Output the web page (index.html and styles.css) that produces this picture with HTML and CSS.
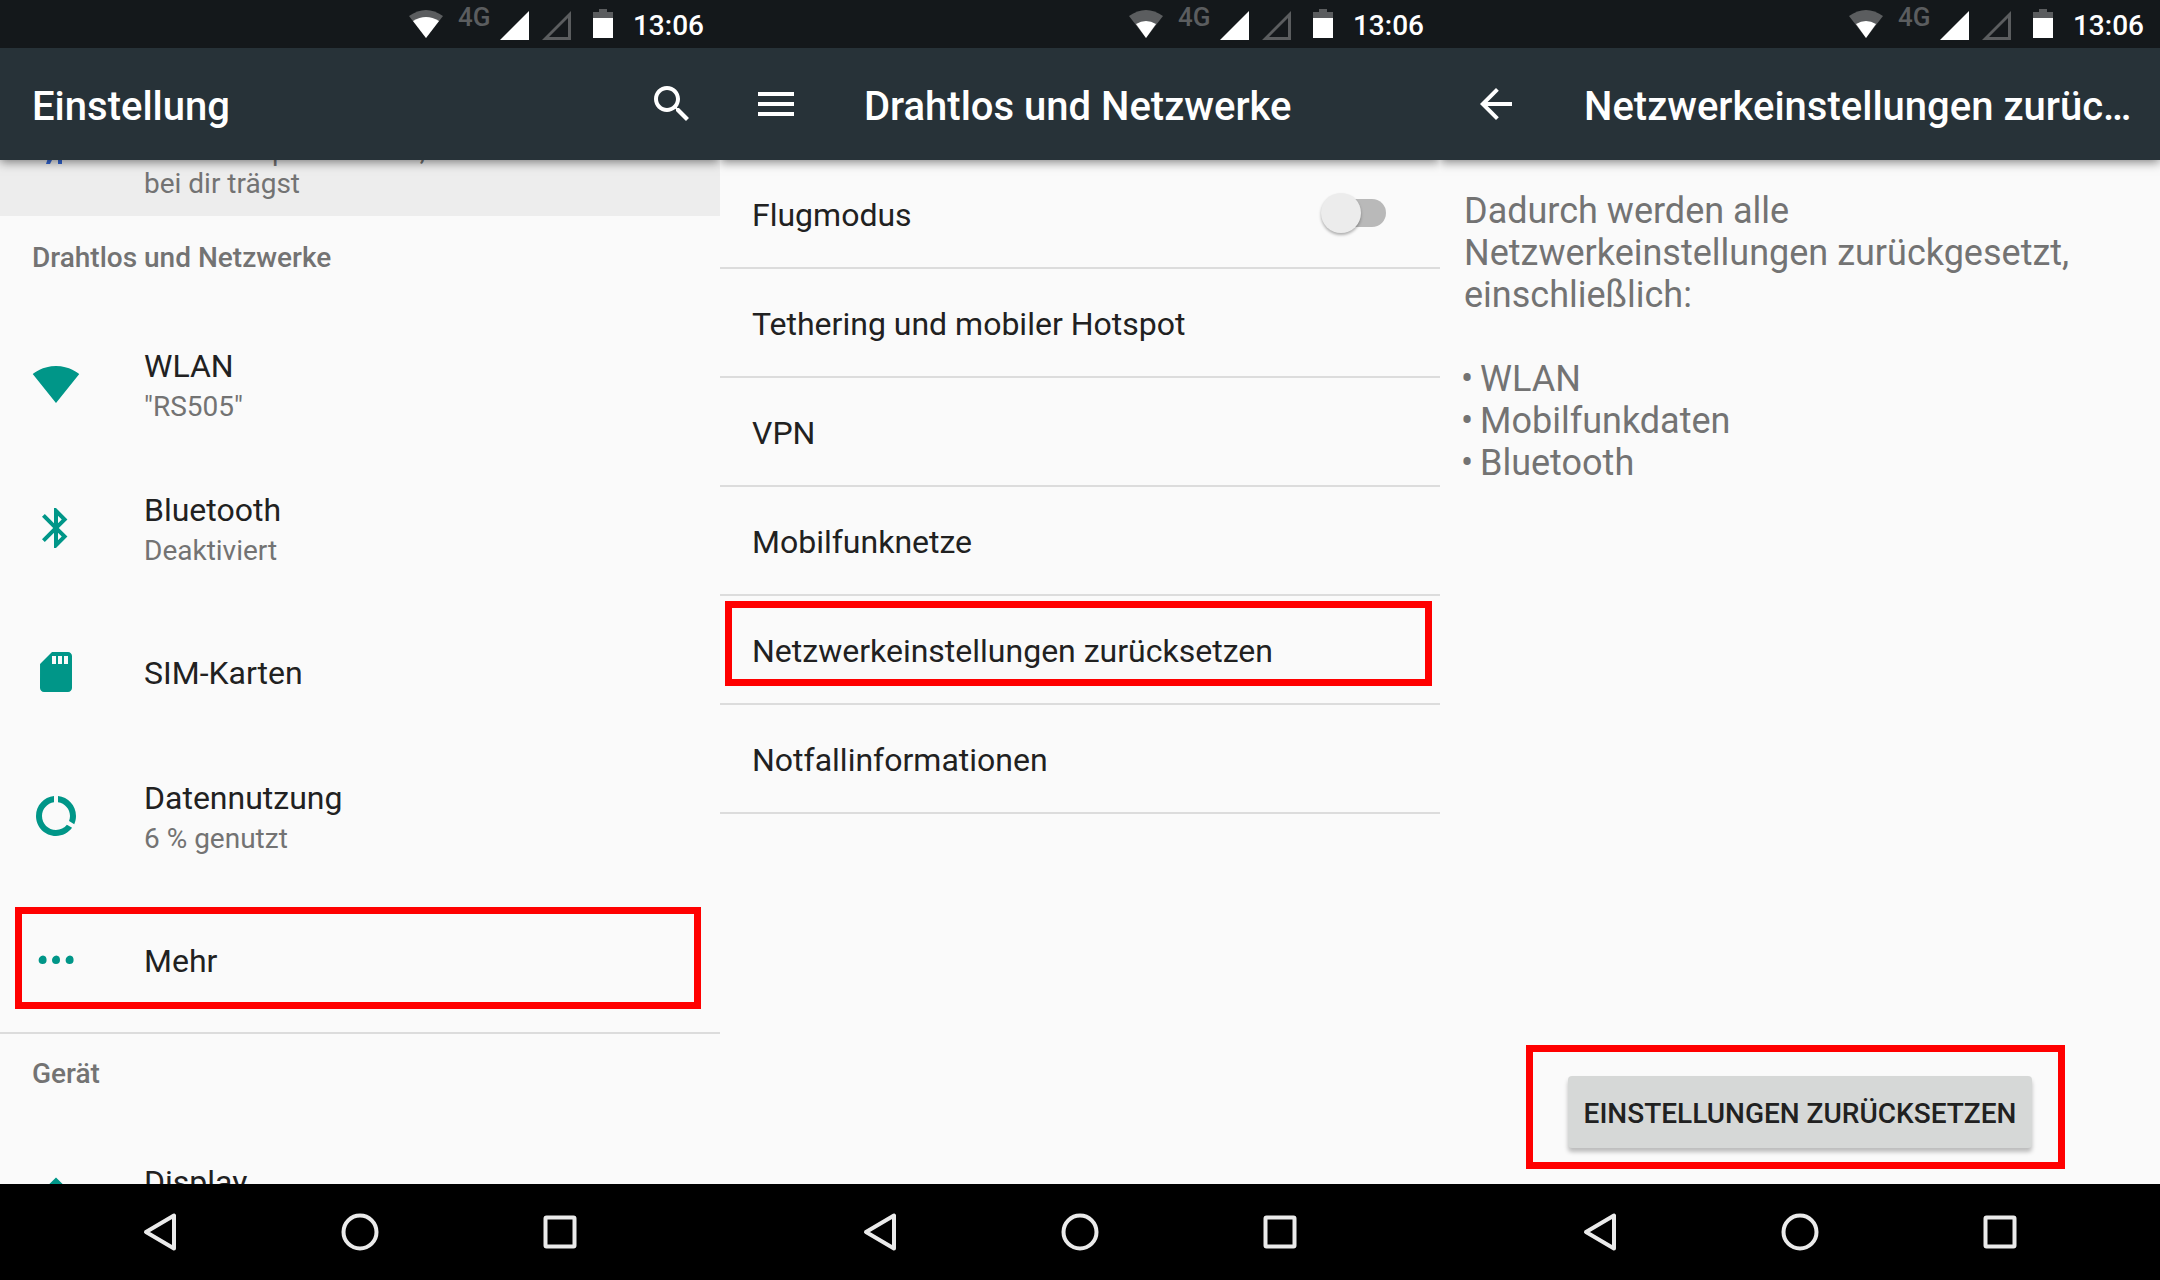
FILE: index.html
```html
<!DOCTYPE html>
<html lang="de">
<head>
<meta charset="utf-8">
<meta name="viewport" content="width=device-width, initial-scale=1">
<title>Netzwerkeinstellungen zurücksetzen</title>
<link rel="stylesheet" href="styles.css">
</head>
<body>
<svg class="sprite" aria-hidden="true">
  <symbol id="signal-full" viewBox="0 0 32 48"><path d="M1 40 30 11V40Z"/></symbol>
  <symbol id="signal-empty" viewBox="0 0 32 48"><path d="M1 40 30 11V40ZM8 37H27V18Z" fill-rule="evenodd"/></symbol>
  <symbol id="battery" viewBox="0 0 20 48"><path class="dim" d="M6 9h8v3h6v7H0v-7h6Z"/><path d="M0 18h20v20H0Z"/></symbol>
  <symbol id="nav-back" viewBox="0 0 48 48"><path d="M38 7.500V40.500L10 24Z"/></symbol>
  <symbol id="nav-home" viewBox="0 0 48 48"><circle cx="24" cy="24" r="16.500"/></symbol>
  <symbol id="nav-recent" viewBox="0 0 48 48"><rect x="9.500" y="9.500" width="29" height="29" rx="1"/></symbol>
</svg>

<main class="screens">
  <section class="screen" aria-label="Einstellung">
    <div class="status">
      <svg class="wifi" viewBox="0 0 36 48"><path class="dim" d="M18 38 1 16Q18 4 35 16Z"/><path d="M18 38 5 21Q18 13 31 21Z"/></svg>
      <span class="network">4G</span>
      <svg class="signal"><use href="#signal-full"/></svg>
      <svg class="signal second dim"><use href="#signal-empty"/></svg>
      <svg class="battery"><use href="#battery"/></svg>
      <time class="clock">13:06</time>
    </div>
    <header class="toolbar">
      <h1 class="title">Einstellung</h1>
      <button class="tool search" aria-label="Suchen"><svg viewBox="0 0 24 24"><path d="M15.500 14h-.79l-.28-.27C15.410 12.590 16 11.110 16 9.500 16 5.910 13.090 3 9.500 3S3 5.910 3 9.500 5.910 16 9.500 16c1.610 0 3.090-.59 4.230-1.570l.27.28v.79l5 4.990L20.490 19l-4.990-5zm-6 0C7.010 14 5 11.990 5 9.500S7.010 5 9.500 5 14 7.010 14 9.500 11.990 14 9.500 14z"/></svg></button>
    </header>
    <div class="content">
      <a class="tip" href="#smartlock">
        <svg class="tip-icon" viewBox="0 0 48 40"><path d="M16 10h5L18 16H14ZM26 10h4V16H26Z"/></svg>
        <span class="tip-text">Gerät entsperrt lassen, während du es bei dir trägst</span>
      </a>
      <h2 class="group first">Drahtlos und Netzwerke</h2>
      <a class="item" href="#wlan">
        <svg class="icon" viewBox="0 0 24 24"><path d="M12.010 21.490L23.640 7c-.45-.34-4.930-4-11.640-4C5.280 3 .81 6.660.36 7l11.630 14.490.01.01.01-.01z"/></svg>
        <span class="label"><span>WLAN</span><small>"RS505"</small></span>
      </a>
      <a class="item" href="#bluetooth">
        <svg class="icon" viewBox="0 0 24 24"><path d="M17.710 7.710L12 2h-1v7.590L6.410 5 5 6.410 10.590 12 5 17.590 6.410 19 11 14.410V22h1l5.710-5.710-4.300-4.290 4.300-4.290zM13 5.830l1.880 1.880L13 9.590V5.830zm1.880 10.460L13 18.170v-3.760l1.880 1.880z"/></svg>
        <span class="label"><span>Bluetooth</span><small>Deaktiviert</small></span>
      </a>
      <a class="item" href="#sim">
        <svg class="icon" viewBox="0 0 24 24"><path d="M18 2h-8L4.020 8 4 20c0 1.100.9 2 2 2h12c1.100 0 2-.9 2-2V4c0-1.100-.9-2-2-2zm-6 6h-2V4h2v4zm3 0h-2V4h2v4zm3 0h-2V4h2v4z"/></svg>
        <span class="label"><span>SIM-Karten</span></span>
      </a>
      <a class="item" href="#daten">
        <svg class="icon" viewBox="0 0 24 24"><path d="M13 2.050v3.030c3.390.49 6 3.390 6 6.920 0 .9-.18 1.750-.48 2.540l2.600 1.530c.56-1.240.88-2.620.88-4.070 0-5.180-3.950-9.450-9-9.950zM12 19c-3.870 0-7-3.130-7-7 0-3.530 2.610-6.430 6-6.920V2.050c-5.060.5-9 4.760-9 9.950 0 5.520 4.470 10 9.990 10 3.310 0 6.240-1.610 8.060-4.090l-2.600-1.530C16.170 17.980 14.210 19 12 19z"/></svg>
        <span class="label"><span>Datennutzung</span><small>6 % genutzt</small></span>
      </a>
      <a class="item" href="#mehr">
        <svg class="icon" viewBox="0 0 24 24"><path d="M5.500 9.800q1.800.2 1.800 2.200a2 2 0 0 1-4 0Q3.500 10.200 5.500 9.800ZM12.200 9.800q1.800.2 1.800 2.200a2 2 0 0 1-4 0Q10.200 10.200 12.200 9.800ZM19 9.800q1.800.2 1.800 2.200a2 2 0 0 1-4 0Q17 10.200 19 9.800Z"/></svg>
        <span class="label"><span>Mehr</span></span>
        <span class="mark mark-more"></span>
      </a>
      <h2 class="group">Gerät</h2>
      <a class="item" href="#display">
        <svg class="icon" viewBox="0 0 24 24"><path d="M20 8.690V4h-4.690L12 .69 8.690 4H4v4.690L.69 12 4 15.310V20h4.690L12 23.310 15.310 20H20v-4.690L23.310 12 20 8.690zM12 18c-3.310 0-6-2.690-6-6s2.690-6 6-6 6 2.690 6 6-2.690 6-6 6z"/></svg>
        <span class="label"><span>Display</span><small>Adaptive Helligkeit</small></span>
      </a>
    </div>
    <nav class="nav" aria-label="Navigation">
      <button aria-label="Zurück"><svg><use href="#nav-back"/></svg></button>
      <button aria-label="Startseite"><svg><use href="#nav-home"/></svg></button>
      <button aria-label="Übersicht"><svg><use href="#nav-recent"/></svg></button>
    </nav>
  </section>

  <section class="screen" aria-label="Drahtlos und Netzwerke">
    <div class="status">
      <svg class="wifi" viewBox="0 0 36 48"><path class="dim" d="M18 38 1 16Q18 4 35 16Z"/><path d="M18 38 8 24Q18 18 28 24Z"/></svg>
      <span class="network">4G</span>
      <svg class="signal"><use href="#signal-full"/></svg>
      <svg class="signal second dim"><use href="#signal-empty"/></svg>
      <svg class="battery"><use href="#battery"/></svg>
      <time class="clock">13:06</time>
    </div>
    <header class="toolbar">
      <button class="tool" aria-label="Menü"><svg viewBox="0 0 24 24"><path d="M3 18h18v-2H3v2zm0-5h18v-2H3v2zm0-7v2h18V6H3z"/></svg></button>
      <h1 class="title">Drahtlos und Netzwerke</h1>
    </header>
    <div class="content">
      <label class="row"><span>Flugmodus</span><input class="switch" type="checkbox" role="switch"></label>
      <a class="row" href="#tethering">Tethering und mobiler Hotspot</a>
      <a class="row" href="#vpn">VPN</a>
      <a class="row" href="#mobilfunk">Mobilfunknetze</a>
      <a class="row" href="#reset">Netzwerkeinstellungen zurücksetzen<span class="mark mark-reset"></span></a>
      <a class="row" href="#notfall">Notfallinformationen</a>
    </div>
    <nav class="nav" aria-label="Navigation">
      <button aria-label="Zurück"><svg><use href="#nav-back"/></svg></button>
      <button aria-label="Startseite"><svg><use href="#nav-home"/></svg></button>
      <button aria-label="Übersicht"><svg><use href="#nav-recent"/></svg></button>
    </nav>
  </section>

  <section class="screen" aria-label="Netzwerkeinstellungen zurücksetzen" id="reset">
    <div class="status">
      <svg class="wifi" viewBox="0 0 36 48"><path class="dim" d="M18 38 1 16Q18 4 35 16Z"/><path d="M18 38 8 24Q18 18 28 24Z"/></svg>
      <span class="network">4G</span>
      <svg class="signal"><use href="#signal-full"/></svg>
      <svg class="signal second dim"><use href="#signal-empty"/></svg>
      <svg class="battery"><use href="#battery"/></svg>
      <time class="clock">13:06</time>
    </div>
    <header class="toolbar">
      <button class="tool" aria-label="Nach oben"><svg viewBox="0 0 24 24"><path d="M20 11H7.800l5.600-5.600L12 4l-8 8 8 8 1.400-1.400L7.800 13H20v-2z"/></svg></button>
      <h1 class="title">Netzwerkeinstellungen zurücksetzen</h1>
    </header>
    <div class="content details">
      <p>Dadurch werden alle Netzwerkeinstellungen zurückgesetzt, einschließlich:</p>
      <ul class="bullets">
        <li>WLAN</li>
        <li>Mobilfunkdaten</li>
        <li>Bluetooth</li>
      </ul>
      <div class="action">
        <button class="reset">EINSTELLUNGEN ZURÜCKSETZEN</button>
        <span class="mark mark-action"></span>
      </div>
    </div>
    <nav class="nav" aria-label="Navigation">
      <button aria-label="Zurück"><svg><use href="#nav-back"/></svg></button>
      <button aria-label="Startseite"><svg><use href="#nav-home"/></svg></button>
      <button aria-label="Übersicht"><svg><use href="#nav-recent"/></svg></button>
    </nav>
  </section>
</main>
</body>
</html>
```
FILE: styles.css
```css
* { box-sizing: border-box; }

body {
  margin: 0;
  background: #000;
  color: #212121;
  font-family: Roboto, "Liberation Sans", sans-serif;
  font-size: 32px;
  line-height: 38px;
}

a { color: inherit; text-decoration: none; }
h1, h2, p, ul { margin: 0; padding: 0; }
button { border: 0; padding: 0; background: none; font: inherit; color: inherit; }
svg { display: block; flex: none; fill: currentColor; }
.sprite { position: absolute; width: 0; height: 0; }

.screens {
  display: grid;
  grid-template-columns: repeat(3, minmax(0, 1fr));
}

.screen {
  display: flex;
  flex-direction: column;
  height: 100vh;
  background: #fafafa;
}

/* status bar */
.status {
  display: flex;
  flex: none;
  justify-content: flex-end;
  height: 48px;
  padding-right: 16px;
  background: #14181b;
  color: #fff;
}
.status svg { height: 48px; }
.dim { fill: #5b5d5f; color: #5b5d5f; }
.wifi { width: 36px; margin-right: 14px; }
.network {
  width: 34px;
  margin-right: 7px;
  color: #5b5d5f;
  font-size: 26px;
  font-weight: 500;
  line-height: 35px;
}
.signal { width: 32px; margin-right: 10px; }
.signal.second { margin-right: 20px; }
.battery { width: 20px; margin-right: 20px; }
.clock { font-size: 28px; font-weight: 500; line-height: 52px; }

/* toolbar */
.toolbar {
  position: relative;
  z-index: 1;
  display: flex;
  flex: none;
  align-items: center;
  gap: 64px;
  height: 112px;
  padding: 0 24px 0 32px;
  background: #273238;
  color: #fff;
  box-shadow: 0 2px 10px rgba(0, 0, 0, .5);
  clip-path: inset(0 0 -16px);
}
.title {
  min-width: 0;
  padding-top: 6px;
  overflow: hidden;
  font-size: 40px;
  font-weight: 500;
  line-height: 48px;
  text-overflow: ellipsis;
  white-space: nowrap;
}
.tool svg { width: 48px; height: 48px; }
.tool.search { margin-left: auto; }

.content { flex: 1; min-height: 0; overflow: hidden; }

/* settings list */
.tip {
  display: flex;
  align-items: flex-end;
  gap: 64px;
  height: 56px;
  padding: 0 96px 16px 32px;
  background: #ededed;
  color: #737373;
  font-size: 28px;
  line-height: 33px;
}
.tip-icon { width: 48px; height: 40px; margin-bottom: 12px; color: #3367d6; }
.group {
  height: 96px;
  padding: 23px 32px 0;
  border-top: 2px solid #dcdcdc;
  color: #737373;
  font-size: 28px;
  font-weight: 500;
  line-height: 33px;
}
.group.first { border-color: transparent; }
.item {
  position: relative;
  display: flex;
  align-items: center;
  gap: 64px;
  height: 144px;
  padding: 0 32px;
}
.icon { width: 48px; height: 48px; color: #009688; }
.label { display: flex; flex-direction: column; gap: 5px; padding-top: 2px; }
.label small { color: #737373; font-size: 28px; line-height: 33px; }

/* wireless list */
.row {
  position: relative;
  display: flex;
  align-items: center;
  justify-content: space-between;
  height: 109px;
  padding: 2px 54px 0 32px;
  border-bottom: 2px solid #dcdcdc;
}
.switch {
  position: relative;
  width: 60px;
  height: 28px;
  margin: 0 0 3px;
  border-radius: 14px;
  background: #b9b9b9;
  appearance: none;
}
.switch::before {
  content: "";
  position: absolute;
  top: -6px;
  left: -5px;
  width: 40px;
  height: 40px;
  border-radius: 50%;
  background: #ececec;
  box-shadow: 0 2px 3px rgba(0, 0, 0, .3);
}
.switch:checked::before { left: 25px; }

/* reset page */
.details {
  display: flex;
  flex-direction: column;
  padding: 30px 24px 36px;
  color: #737373;
  font-size: 36px;
  line-height: 42px;
}
.bullets { margin-top: 42px; list-style: none; }
.bullets li { display: flex; }
.bullets li::before { content: "•"; width: 19px; margin-left: -3px; }
.action {
  position: relative;
  align-self: center;
  margin-top: auto;
}
.reset {
  display: block;
  height: 72px;
  padding: 2px 16px 0;
  border-radius: 4px;
  background: #d6d8d7;
  box-shadow: 0 4px 4px rgba(0, 0, 0, .25);
  color: #212121;
  font-size: 28px;
  font-weight: 500;
  line-height: 33px;
}

/* red frames over the controls to tap */
.mark { position: absolute; border: 7px solid #f00; pointer-events: none; }
.mark-more { inset: 19px 19px 23px 15px; }
.mark-reset { inset: 5px 8px 17px 5px; }
.mark-action { inset: -31px -33px -21px -42px; }

/* navigation bar */
.nav {
  display: grid;
  flex: none;
  grid-template-columns: repeat(3, 1fr);
  align-items: center;
  justify-items: center;
  height: 96px;
  padding: 0 60px;
  background: #000;
  color: #ebebeb;
}
.nav svg {
  width: 48px;
  height: 48px;
  fill: none;
  stroke: currentColor;
  stroke-width: 4px;
  stroke-linejoin: round;
}
```
